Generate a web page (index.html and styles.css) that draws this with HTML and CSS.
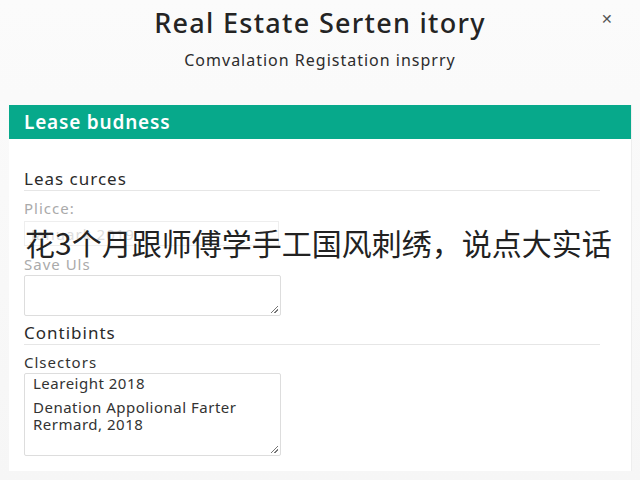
FILE: index.html
```html
<!DOCTYPE html>
<html lang="en">
<head>
<meta charset="utf-8">
<link rel="stylesheet" href="styles.css">
</head>
<body>
<div class="page">
  <header class="head">
    <h1 class="title">Real Estate Serten itory</h1>
    <p class="subtitle">Comvalation Registation insprry</p>
    <span class="close">&#x2715;</span>
  </header>
  <section class="panel">
    <div class="panel-bar">Lease budness</div>
    <div class="panel-body">
      <h2 class="sec">Leas curces</h2>
      <label class="lbl muted">Plicce:</label>
      <div class="input"><span class="ghost">Januark 2019</span></div>
      <label class="lbl muted lbl-gap">Save Uls</label>
      <div class="textarea small"></div>
      <h2 class="sec sec2">Contibints</h2>
      <label class="lbl">Clsectors</label>
      <div class="textarea big">
        <p class="ta-line">Leareight 2018</p>
        <p class="ta-line ta-gap">Denation Appolional Farter<br>Rermard, 2018</p>
      </div>
    </div>
  </section>
  <div class="caption">花3个月跟师傅学手工国风刺绣，说点大实话</div>
</div>
</body>
</html>
```
FILE: styles.css
```css
html, body {
  margin: 0;
  padding: 0;
}
body {
  background: #f6f6f6;
  font-family: "Noto Sans", "Open Sans", sans-serif;
  color: #2a2a2a;
  width: 640px;
  height: 480px;
  overflow: hidden;
}
.page {
  position: relative;
  height: 480px;
  background: linear-gradient(#fbfbfb, #f6f6f6);
}
.head {
  position: relative;
  text-align: center;
  padding-top: 6px;
  height: 99px;
}
.title {
  margin: 0;
  font-size: 27px;
  font-weight: 500;
  line-height: 34px;
  color: #242424;
  letter-spacing: 1.3px;
}
.subtitle {
  margin: 9px 0 0;
  font-size: 16px;
  line-height: 22px;
  color: #2c2c2c;
  letter-spacing: 1px;
}
.close {
  position: absolute;
  right: 27px;
  top: 9px;
  font-size: 14px;
  color: #555;
}
.panel {
  margin: 0 8px 0 9px;
  background: #fff;
  border-right: 1px solid #eee;
  height: 366px;
}
.panel-bar {
  background: #07a98b;
  color: #fff;
  font-size: 19px;
  font-weight: 600;
  height: 34px;
  line-height: 34px;
  padding-left: 15px;
  letter-spacing: 0.8px;
}
.panel-body {
  padding: 30px 31px 0 15px;
}
.sec {
  margin: 0;
  font-size: 17px;
  font-weight: 400;
  line-height: 20px;
  color: #2a2a2a;
  border-bottom: 1px solid #e6e6e6;
  padding-bottom: 1px;
  letter-spacing: 1px;
}
.sec2 {
  margin-top: 7px;
}
.lbl {
  display: block;
  font-size: 15px;
  line-height: 18px;
  margin-top: 8px;
  color: #333;
  letter-spacing: 1px;
}
.muted {
  color: #aaa;
}
.lbl-gap {
  margin-top: 9px;
}
.input {
  width: 255px;
  height: 25px;
  border: 1px solid #eee;
  margin-top: 4px;
  font-size: 15px;
  line-height: 25px;
  padding-left: 6px;
  box-sizing: border-box;
  letter-spacing: 1px;
}
.ghost {
  color: #ddd;
}
.textarea {
  position: relative;
  width: 257px;
  border: 1px solid #ddd;
  border-radius: 2px;
  box-sizing: border-box;
  margin-top: 2px;
  background: #fff;
}
.textarea::after {
  content: "";
  position: absolute;
  right: 2px;
  bottom: 2px;
  width: 7px;
  height: 7px;
  background: linear-gradient(135deg, transparent 45%, #777 45%, #777 55%, transparent 55%, transparent 70%, #777 70%, #777 80%, transparent 80%);
}
.small {
  height: 41px;
}
.big {
  height: 83px;
  padding: 1px 8px;
  margin-top: 2px;
}
.ta-line {
  margin: 0;
  font-size: 15px;
  line-height: 17px;
  color: #333;
  letter-spacing: 0.5px;
  white-space: nowrap;
}
.ta-gap {
  margin-top: 7px;
  line-height: 17px;
}
.caption {
  position: absolute;
  left: 25px;
  top: 221px;
  font-family: "Noto Sans CJK SC", sans-serif;
  font-size: 30px;
  line-height: 42px;
  color: #222;
  white-space: nowrap;
}
```
